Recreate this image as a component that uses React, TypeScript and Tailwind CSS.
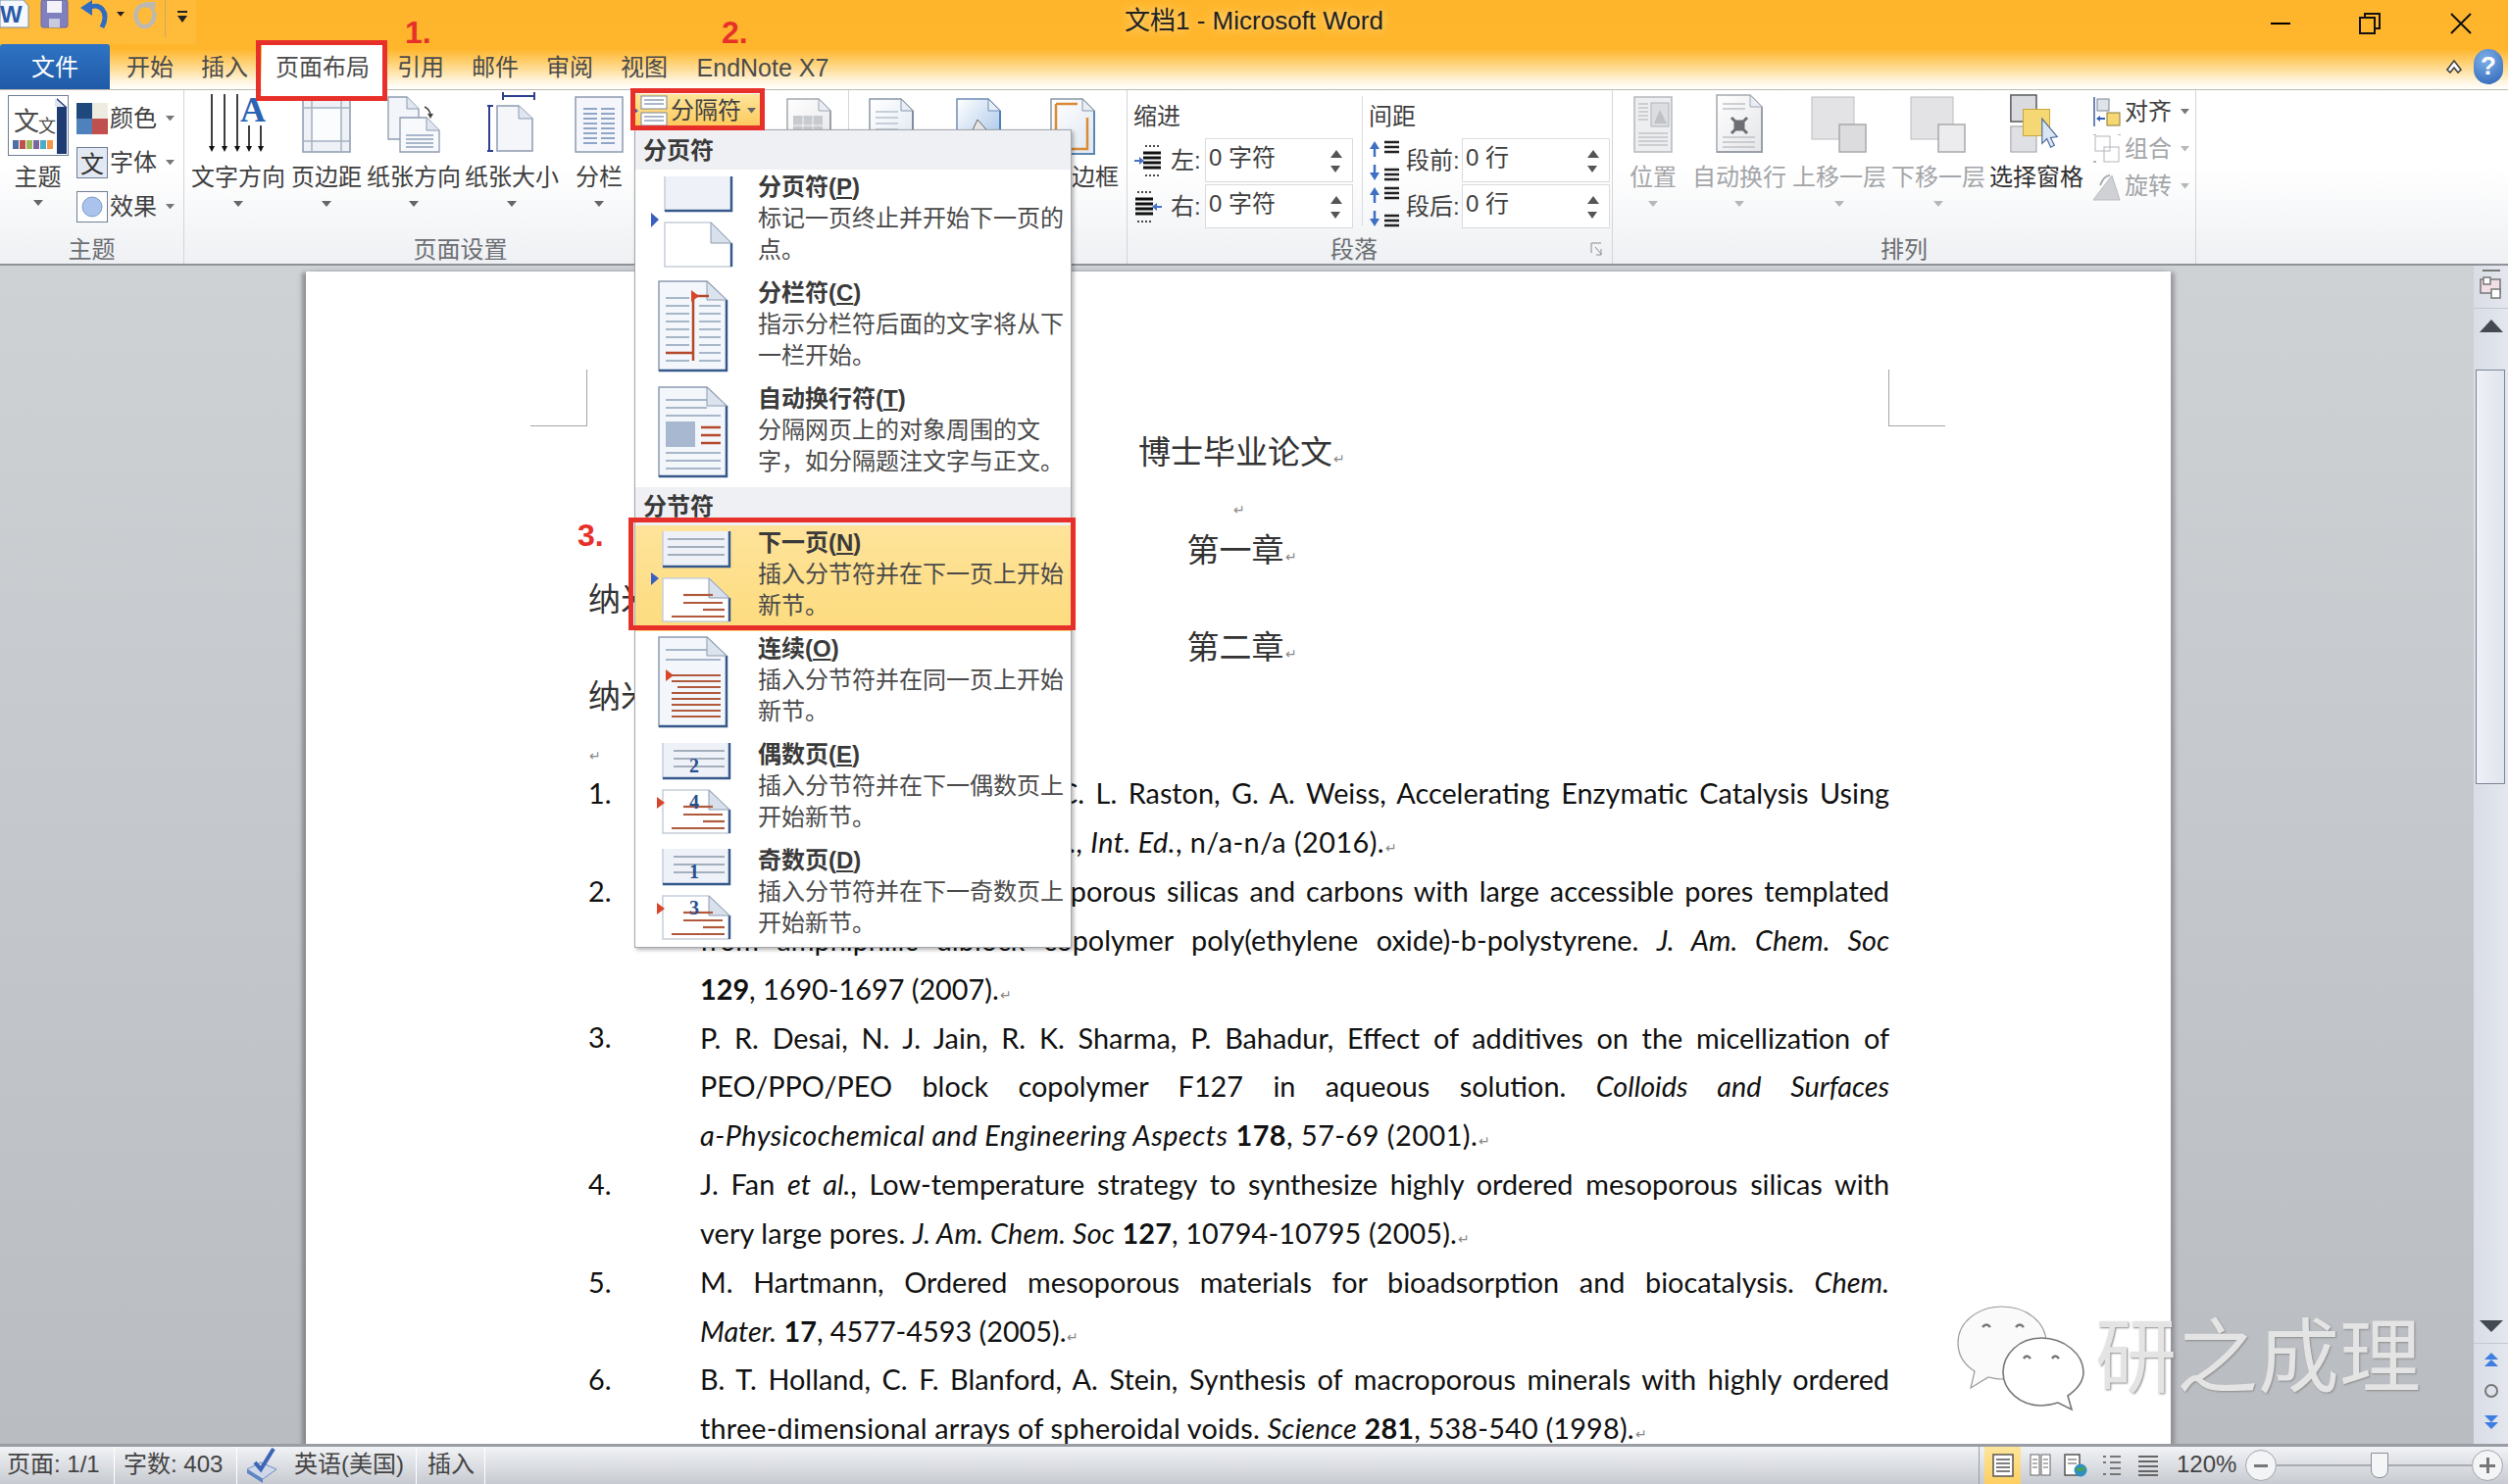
import React, { useId } from "react";

const Caret = ({ c = "#666", s = 9 }: { c?: string; s?: number }) => (
  <svg width={s} height={s * 0.6} viewBox="0 0 10 6"><polygon points="0,0 10,0 5,6" fill={c} /></svg>
);

const Doc = ({ w = 46, h = 58, tone = "#8d9bb0", edge = "#5a78a5", fill = "#dfe7f2", children }: any) => {
  const id = useId();
  return (
    <svg width={w} height={h} viewBox={`0 0 ${w} ${h}`}>
      <defs>
        <linearGradient id={id} x1="0" y1="0" x2="1" y2="1">
          <stop offset="0" stopColor="#ffffff" />
          <stop offset="1" stopColor={fill} />
        </linearGradient>
      </defs>
      <path d={`M1 1 H${w - 13} L${w - 1} 13 V${h - 1} H1 Z`} fill={`url(#${id})`} stroke={tone} strokeWidth="1.5" />
      <path d={`M${w - 1} 13 V${h - 1} H1`} fill="none" stroke={edge} strokeWidth="2" />
      <path d={`M${w - 13} 1 V13 H${w - 1} Z`} fill="#e9eef6" stroke={tone} />
      {children}
    </svg>
  );
};

const TextLines = ({ x1, x2, ys, c = "#8ea0b8", w = 1.5 }: any) => (
  <>{ys.map((y: number) => <line key={y} x1={x1} x2={x2} y1={y} y2={y} stroke={c} strokeWidth={w} />)}</>
);

const ThemeIcon = () => (
  <svg width="62" height="62" viewBox="0 0 62 62">
    <rect x="0.5" y="0.5" width="61" height="61" fill="#fff" stroke="#6f7f96" />
    <text x="6" y="36" fontSize="26" fill="#4a4a4a" fontFamily="'Noto Sans CJK SC'">文</text>
    <text x="31" y="38" fontSize="18" fill="#4a4a4a" fontFamily="'Noto Sans CJK SC'">文</text>
    <path d="M50 3 L60 12 V60 H50 Z" fill="#1f3b74" />
    <path d="M48 3 L58 12 H48 Z" fill="#dfe5ee" />
    {["#4f6fa8", "#c0504d", "#9bbb59", "#8064a2", "#4bacc6", "#f79646"].map((c, i) => (
      <rect key={c} x={5 + i * 7} y="46" width="6" height="9" fill={c} />
    ))}
  </svg>
);
const ColorIcon = () => (
  <svg width="32" height="32" viewBox="0 0 32 32">
    <rect width="16" height="16" fill="#1f497d" /><rect x="16" width="16" height="16" fill="#eeece1" />
    <rect y="16" width="16" height="16" fill="#4f81bd" /><rect x="16" y="16" width="16" height="16" fill="#c0504d" />
  </svg>
);
const FontIcon = () => (
  <svg width="32" height="32" viewBox="0 0 32 32">
    <rect x="0.5" y="0.5" width="31" height="31" fill="#e3e9f2" stroke="#6f7f96" />
    <text x="4" y="26" fontSize="24" fill="#333" fontFamily="'Noto Sans CJK SC'">文</text>
  </svg>
);
const EffectIcon = () => (
  <svg width="32" height="32" viewBox="0 0 32 32">
    <rect x="0.5" y="0.5" width="31" height="31" fill="#fff" stroke="#6f7f96" />
    <circle cx="16" cy="16" r="10" fill="#a9c3ec" stroke="#7f9cc9" />
  </svg>
);
const TextDirIcon = () => (
  <svg width="62" height="60" viewBox="0 0 62 60">
    {[4, 17, 30].map((x) => <g key={x}><line x1={x} x2={x} y1="0" y2="54" stroke="#111" strokeWidth="1.6" /><polygon points={`${x - 3},53 ${x + 3},53 ${x},59`} fill="#111" /></g>)}
    {[42, 54].map((x) => <g key={x}><line x1={x} x2={x} y1="32" y2="54" stroke="#111" strokeWidth="1.6" /><polygon points={`${x - 3},53 ${x + 3},53 ${x},59`} fill="#111" /></g>)}
    <text x="33" y="28" fontSize="36" fontWeight="700" fontFamily="'Liberation Serif'" fill="#2c64b4">A</text>
  </svg>
);
const MarginIcon = () => (
  <svg width="50" height="58" viewBox="0 0 50 58">
    <rect x="1" y="1" width="48" height="56" fill="#eef1f6" stroke="#8d9bb0" strokeWidth="1.5" />
    <path d="M10 1 V57 M40 1 V57 M1 46 H49 M1 12 H49" stroke="#a7b2c2" strokeWidth="1.5" />
    <rect x="11" y="13" width="28" height="32" fill="#fbfcfe" />
  </svg>
);
const OrientIcon = () => (
  <svg width="54" height="58" viewBox="0 0 54 58">
    <path d="M1 1 H20 L32 13 V44 H1 Z" fill="#f2f5fa" stroke="#8d9bb0" strokeWidth="1.3" />
    <path d="M20 1 V13 H32" fill="#dfe6f0" stroke="#8d9bb0" />
    <path d="M13 22 H40 L53 35 V57 H13 Z" fill="#f7f9fc" stroke="#8d9bb0" strokeWidth="1.3" />
    <path d="M40 22 V35 H53" fill="#dfe6f0" stroke="#8d9bb0" />
    <TextLines x1={19} x2={47} ys={[40, 44, 48, 52]} />
    <path d="M38 11 Q44 14 44 20" fill="none" stroke="#444" strokeWidth="1.5" />
    <polygon points="41,18 47,18 44,23" fill="#444" />
  </svg>
);
const SizeIcon = () => (
  <svg width="50" height="62" viewBox="0 0 50 62">
    <path d="M16 4 H48 M16 0 V8 M48 0 V8 M2 14 V60 M-2 14 H6 M-2 60 H6" stroke="#2f3f8f" strokeWidth="2" />
    <path d="M10 14 H32 L46 27 V60 H10 Z" fill="#f4f6fa" stroke="#8d9bb0" strokeWidth="1.5" />
    <path d="M32 14 V27 H46" fill="#dfe6f0" stroke="#8d9bb0" />
  </svg>
);
const ColsIcon = () => (
  <svg width="50" height="58" viewBox="0 0 50 58">
    <rect x="1" y="1" width="48" height="56" fill="#f4f6fb" stroke="#8d9bb0" strokeWidth="1.5" />
    <TextLines x1={9} x2={23} ys={[13, 18, 23, 28, 33, 38, 43, 48]} c="#8fa6c6" w={2} />
    <TextLines x1={27} x2={41} ys={[13, 18, 23, 28, 33, 38, 43, 48]} c="#8fa6c6" w={2} />
  </svg>
);
const BreaksSmall = () => (
  <svg width="36" height="32" viewBox="0 0 36 32">
    <rect x="8" y="1" width="26" height="13" fill="#fff" stroke="#7b8798" />
    <TextLines x1={11} x2={31} ys={[5, 9]} c="#8ea0b8" />
    <rect x="8" y="18" width="26" height="13" fill="#fff" stroke="#7b8798" />
    <TextLines x1={11} x2={31} ys={[22, 26]} c="#8ea0b8" />
    <polygon points="0,12 5,16 0,20" fill="#3b5fc0" />
  </svg>
);
const GrayDoc = ({ children }: any) => <Doc w={46} h={58} tone="#a4a8ae" edge="#9aa0a8" fill="#e4e5e8">{children}</Doc>;
const LineNumIcon = () => <GrayDoc><rect x="7" y="18" width="30" height="30" fill="#c7cace" /><path d="M7 28 H37 M7 38 H37 M17 18 V48 M27 18 V48" stroke="#f5f5f5" /></GrayDoc>;
const WatermarkIcon = () => <Doc tone="#8a97a8" edge="#7d8da5"><TextLines x1={7} x2={30} ys={[14, 20, 26, 32]} c="#b9c1cc" /><text x="12" y="50" fontSize="26" fill="#e99a9a" fontFamily="'Liberation Sans'">A</text></Doc>;
const PageColorIcon = () => <Doc tone="#6f8db5" edge="#4d7fb8" fill="#9dbfe6"><path d="M8 52 L22 22 L36 38 L26 54 Z" fill="#e6e6e6" stroke="#666" /></Doc>;
const BorderIcon = () => <Doc tone="#8a97a8" edge="#5a88b5"><path d="M6 6 H28 M6 6 V52 H38 V20" fill="none" stroke="#d98b36" strokeWidth="2.5" /></Doc>;
const PositionIcon = () => (
  <svg width="40" height="58" viewBox="0 0 40 58">
    <rect x="1" y="1" width="38" height="56" fill="#eceef0" stroke="#b5b8bc" strokeWidth="1.5" />
    <TextLines x1={5} x2={35} ys={[38, 42, 46, 50]} c="#c2c5c9" />
    <TextLines x1={5} x2={15} ys={[8, 12, 16, 20, 24]} c="#c2c5c9" />
    <rect x="18" y="7" width="18" height="24" fill="#dcdde0" stroke="#b0b3b7" />
    <path d="M21 28 L27 14 L34 28 Z" fill="#bfc1c5" />
  </svg>
);
const WrapIcon = () => (
  <Doc w={48} h={60} tone="#a4a8ae" edge="#9aa0a8" fill="#e4e5e8">
    <TextLines x1={7} x2={30} ys={[10, 15]} c="#bfc2c6" />
    <TextLines x1={7} x2={40} ys={[44, 49, 54]} c="#bfc2c6" />
    <path d="M16 24 L32 40 M32 24 L16 40 M20 28 H28 V36 H20 Z" stroke="#6b6e72" strokeWidth="3" fill="#8a8d91" />
  </Doc>
);
const LayerIcon = ({ front }: { front: boolean }) => (
  <svg width="58" height="58" viewBox="0 0 58 58">
    <rect x="1" y="1" width="43" height="43" fill="#e3e3e6" stroke="#bcbcc0" />
    <rect x="29" y="29" width="27" height="28" fill={front ? "#dcdcde" : "#ececee"} stroke="#a9a9ad" strokeWidth="1.5" />
  </svg>
);
const PaneIcon = () => (
  <svg width="56" height="60" viewBox="0 0 56 62">
    <rect x="1" y="1" width="27" height="28" fill="#d9dbdf" stroke="#555" strokeWidth="1.5" />
    <rect x="1" y="34" width="27" height="27" fill="#dfe0e3" stroke="#9a9da2" />
    <rect x="14" y="16" width="28" height="28" fill="#f5d873" stroke="#c9a53d" />
    <path d="M34 26 V52 L39 47 L43 56 L47 54 L43 46 L50 45 Z" fill="#dbe5f4" stroke="#4a6a9c" strokeWidth="1.2" />
  </svg>
);
const AlignIcon = () => (
  <svg width="28" height="30" viewBox="0 0 28 30">
    <line x1="1" y1="0" x2="1" y2="30" stroke="#3c5f96" strokeWidth="1.5" />
    <rect x="4" y="2" width="12" height="12" fill="#dfe3ea" stroke="#7b8798" />
    <rect x="14" y="16" width="13" height="13" fill="#f5d873" stroke="#8a7a3a" />
    <path d="M12 22 H4" stroke="#2f62b5" strokeWidth="2" />
    <polygon points="3,22 7,19 7,25" fill="#2f62b5" />
  </svg>
);
const GroupIcon = () => (
  <svg width="28" height="30" viewBox="0 0 28 30">
    <rect x="2" y="2" width="15" height="15" fill="none" stroke="#b4b6ba" />
    <rect x="11" y="13" width="15" height="15" fill="none" stroke="#b4b6ba" />
    <path d="M0 0h3M25 0h3M0 28h3" stroke="#b4b6ba" strokeWidth="2" />
  </svg>
);
const RotateIcon = () => (
  <svg width="30" height="30" viewBox="0 0 30 30">
    <polygon points="1,29 28,29 20,4" fill="#cfd1d4" stroke="#b9bbbf" />
    <path d="M8 14 Q12 4 18 4" stroke="#aaa" strokeWidth="2" fill="none" />
  </svg>
);
const IndentIcon = ({ right }: { right?: boolean }) => (
  <svg width="30" height="36" viewBox="0 0 30 36" style={right ? { transform: "scaleX(-1)" } : undefined}>
    <path d="M12 3 H27 M12 33 H27" stroke="#111" strokeWidth="1.5" strokeDasharray="2 2" />
    <path d="M10 10 H28 M10 15 H28 M10 20 H28 M10 25 H28" stroke="#111" strokeWidth="3" />
    <path d="M1 18 H8" stroke="#4472c4" strokeWidth="2" />
    <polygon points="11,18 6,14 6,22" fill="#4472c4" />
  </svg>
);
const SpaceIcon = ({ flip }: { flip?: boolean }) => (
  <svg width="32" height="44" viewBox="0 0 32 44" style={flip ? { transform: "scaleY(-1)" } : undefined}>
    <path d="M16 3 H31 M16 8 H31 M16 13 H31 M16 31 H31 M16 36 H31 M16 41 H31" stroke="#222" strokeWidth="2.4" />
    <polygon points="6,2 1,10 11,10" fill="#3f6fc4" /><line x1="6" x2="6" y1="8" y2="18" stroke="#3f6fc4" strokeWidth="2.5" />
    <polygon points="6,42 1,34 11,34" fill="#3f6fc4" /><line x1="6" x2="6" y1="26" y2="36" stroke="#3f6fc4" strokeWidth="2.5" />
  </svg>
);
const Launcher = () => (
  <svg width="12" height="14" viewBox="0 0 12 14"><path d="M1 1 H11 M1 1 V11 M5 5 L11 12 M11 7 V13 H6" stroke="#8a8d91" fill="none" /></svg>
);

const BigBtn = ({ w, label, icon, gray, cls = "" }: any) => (
  <div className={`flex flex-col items-center shrink-0 ${cls}`} style={{ width: w }}>
    <div className="h-[60px] flex items-end justify-center">{icon}</div>
    <div className={`h-[34px] leading-[34px] mt-[8px] whitespace-nowrap ${gray ? "text-[#a3a5a8]" : "text-[#3f3f3f]"}`}>{label}</div>
    <div className="mt-[6px] h-2 flex items-center"><Caret c={gray ? "#b5b7ba" : "#666"} s={10} /></div>
  </div>
);

const SmallRow = ({ icon, label, gray, h }: any) => (
  <div className={`flex items-center ${h}`}>
    <div className="w-[32px] flex justify-center shrink-0">{icon}</div>
    <span className={`ml-[2px] w-[50px] whitespace-nowrap ${gray ? "text-[#a3a5a8]" : "text-[#3f3f3f]"}`}>{label}</span>
    <span className="ml-[7px] flex"><Caret c={gray ? "#b5b7ba" : "#777"} s={9} /></span>
  </div>
);

const Group = ({ w, label, labelCls = "", children, launcher }: any) => (
  <div className="relative flex flex-col h-full border-r border-[#d3d5d9] shrink-0" style={{ width: w }}>
    <div className="flex-1 flex pt-[4px] overflow-visible">{children}</div>
    <div className={`h-[32px] leading-[35px] text-center text-[#6c6f73] ${labelCls}`}>{label}</div>
    {launcher && <div className="absolute right-[10px] bottom-[8px] flex"><Launcher /></div>}
  </div>
);

const Spin = ({ value, label, icon, wide }: any) => (
  <div className="flex items-center h-[47px]">
    <div className="w-[38px] flex justify-start shrink-0">{icon}</div>
    <span className={`${wide ? "w-[57px]" : "w-[35px]"} whitespace-nowrap text-[#3f3f3f] shrink-0`}>{label}</span>
    <div className="w-[151px] h-[45px] bg-white border border-[#d9dbdf] flex pl-[3px] pt-[1px] justify-between text-[#3f3f3f]">
      <span>{value}</span>
      <span className="flex flex-col gap-[8px] pt-[10px] pr-[10px]">
        <svg width="12" height="8" viewBox="0 0 12 8"><polygon points="6,0 12,8 0,8" fill="#555" /></svg>
        <svg width="10" height="7" viewBox="0 0 10 7"><polygon points="0,0 10,0 5,7" fill="#555" /></svg>
      </span>
    </div>
  </div>
);

const Ribbon = () => (
  <div className="h-[179px] flex shrink-0 text-[24px] border-b-2 border-[#8f9297] bg-[linear-gradient(to_bottom,#ffffff_0%,#ffffff_45%,#eef0f3_100%)]">
    <Group w={188} label="主题">
      <div className="pl-[1px] flex flex-col items-center w-[76px]">
        <div className="h-[64px] flex items-start pt-[1px]"><ThemeIcon /></div>
        <div className="text-[#3f3f3f] h-[34px] leading-[34px] mt-[4px]">主题</div>
        <div className="mt-[6px]"><Caret s={10} /></div>
      </div>
      <div className="flex flex-col pl-[2px] pt-[2px]">
        <SmallRow h="h-[45px]" icon={<ColorIcon />} label="颜色" />
        <SmallRow h="h-[45px]" icon={<FontIcon />} label="字体" />
        <SmallRow h="h-[45px]" icon={<EffectIcon />} label="效果" />
      </div>
    </Group>
    <Group w={678} label="页面设置" labelCls="pr-[114px]">
      <div className="pl-[7px] flex">
        <BigBtn w={96} label="文字方向" icon={<TextDirIcon />} />
        <BigBtn cls="ml-[6px]" w={72} label="页边距" icon={<MarginIcon />} />
        <BigBtn cls="ml-[5px]" w={96} label="纸张方向" icon={<OrientIcon />} />
        <BigBtn cls="ml-[4px]" w={96} label="纸张大小" icon={<SizeIcon />} />
        <BigBtn cls="ml-[17px]" w={48} label="分栏" icon={<ColsIcon />} />
        <div className="ml-[11px] w-[129px] h-[34px] flex items-center bg-[linear-gradient(to_bottom,#fde59a,#fdc95a)] shrink-0">
          <BreaksSmall />
          <span className="ml-[2px] text-[#3f3f3f]">分隔符</span>
          <span className="ml-[6px] flex"><Caret s={9} /></span>
        </div>
        <div className="ml-[27px] pt-[4px]"><LineNumIcon /></div>
      </div>
    </Group>
    <Group w={284} label="页面背景">
      <div className="pl-[20px] flex">
        <div className="pt-[4px]"><WatermarkIcon /></div>
        <div className="pt-[4px] ml-[43px]"><PageColorIcon /></div>
        <div className="ml-[50px]">
          <div className="pt-[4px]"><BorderIcon /></div>
          <div className="h-[34px] leading-[34px] mt-[6px] ml-[-26px] w-[72px] text-right text-[#3f3f3f] whitespace-nowrap">页面边框</div>
        </div>
      </div>
    </Group>
    <Group w={495} label="段落" labelCls="pr-[32px]" launcher>
      <div className="pl-[6px] pt-[2px] flex">
        <div className="w-[232px] shrink-0">
          <div className="h-[42px] leading-[42px] text-[#3f3f3f]">缩进</div>
          <Spin value="0 字符" label="左:" icon={<IndentIcon />} />
          <Spin value="0 字符" label="右:" icon={<IndentIcon right />} />
        </div>
        <div className="border-l border-[#d9dbdf] h-[132px] pl-[6px] ml-[1px] w-[253px] shrink-0">
          <div className="h-[42px] leading-[42px] text-[#3f3f3f]">间距</div>
          <Spin wide value="0 行" label="段前:" icon={<SpaceIcon />} />
          <Spin wide value="0 行" label="段后:" icon={<SpaceIcon flip />} />
        </div>
      </div>
    </Group>
    <Group w={595} label="排列">
      <div className="pl-[17px] flex">
        <BigBtn gray w={48} label="位置" icon={<PositionIcon />} />
        <BigBtn gray cls="ml-[16px]" w={96} label="自动换行" icon={<WrapIcon />} />
        <BigBtn gray cls="ml-[6px]" w={96} label="上移一层" icon={<LayerIcon front />} />
        <BigBtn gray cls="ml-[5px]" w={96} label="下移一层" icon={<LayerIcon front={false} />} />
        <div className="ml-[4px] w-[96px] flex flex-col items-center shrink-0">
          <div className="h-[60px] flex items-end"><PaneIcon /></div>
          <div className="h-[34px] leading-[34px] mt-[8px] text-[#2f2f2f] whitespace-nowrap">选择窗格</div>
        </div>
        <div className="ml-[8px] flex flex-col -mt-[1px]">
          <SmallRow h="h-[38px]" icon={<AlignIcon />} label="对齐" />
          <SmallRow gray h="h-[38px]" icon={<GroupIcon />} label="组合" />
          <SmallRow gray h="h-[38px]" icon={<RotateIcon />} label="旋转" />
        </div>
      </div>
    </Group>
    <div className="flex-1" />
  </div>
);

const TopBar = () => (
  <div className="h-[92px] shrink-0 border-b border-[#bdbab2] bg-[linear-gradient(to_bottom,#ffb52b_0%,#ffb62c_55%,#ffd98a_75%,#fff6e2_92%,#ffffff_100%)]">
    <div className="h-[45px] relative flex items-start">
      <div className="flex items-start h-[45px] pr-[8px] bg-[#ffc24f]/40 shrink-0">
        <svg width="30" height="30" viewBox="0 0 30 30">
          <path d="M0 0 H24 L29 6 V28 H0 Z" fill="#f5f8fc" stroke="#7d8da5" />
          <text x="0" y="23" fontSize="24" fontWeight="700" fontFamily="'Liberation Sans'" fill="#2a5aa8">W</text>
        </svg>
        <svg className="ml-[11px]" width="30" height="30" viewBox="0 0 30 30">
          <rect x="1" y="0" width="27" height="28" rx="2" fill="#8080c0" stroke="#6a6a9a" />
          <rect x="7" y="1" width="15" height="12" fill="#f2f2f8" />
          <rect x="9" y="19" width="11" height="9" fill="#c9c9df" />
        </svg>
        <svg className="ml-[9px]" width="34" height="32" viewBox="0 0 34 32">
          <path d="M10 8 C22 2 32 12 24 28" fill="none" stroke="#2f6dc0" strokeWidth="5" />
          <polygon points="2,8 14,0 14,16" fill="#2f6dc0" />
        </svg>
        <span className="ml-[5px] mt-[12px] flex"><Caret c="#222" s={8} /></span>
        <svg className="ml-[8px]" width="26" height="30" viewBox="0 0 26 30">
          <path d="M16 6 C5 2 -1 16 8 26 C16 30 24 22 22 12" fill="none" stroke="#bdb9ae" strokeWidth="4.5" />
          <polygon points="24,2 12,2 22,14" fill="#bdb9ae" />
        </svg>
        <div className="ml-[7px] w-px h-[38px] bg-[#c9a860]" />
        <div className="ml-[11px] mt-[11px]">
          <svg width="12" height="14" viewBox="0 0 12 14"><path d="M1 1 H11" stroke="#222" strokeWidth="2" /><polygon points="1,5 11,5 6,12" fill="#222" /></svg>
        </div>
      </div>
      <div className="flex-1 text-center text-[26px] leading-[42px] text-[#222] pl-[42px] whitespace-pre [text-shadow:0_0_10px_#ffe6a3]">文档1 - Microsoft Word</div>
      <div className="flex items-center h-[45px] pt-[3px] pr-[37px] text-[#111] shrink-0">
        <span className="w-[20px] h-[2px] bg-black" />
        <svg className="ml-[70px]" width="22" height="22" viewBox="0 0 22 22">
          <rect x="1" y="5" width="15" height="16" fill="none" stroke="#111" strokeWidth="2" />
          <path d="M6 5 V1 H21 V16 H16" fill="none" stroke="#111" strokeWidth="2" />
        </svg>
        <svg className="ml-[71px]" width="22" height="22" viewBox="0 0 22 22"><path d="M1 1 L21 21 M21 1 L1 21" stroke="#111" strokeWidth="2" /></svg>
      </div>
    </div>
    <div className="h-[46px] flex items-stretch text-[24px] text-[#4b4b4b] leading-[48px]">
      <div className="w-[112px] bg-[linear-gradient(to_bottom,#2f74c4,#1f5aa8)] rounded-t-[3px] text-white text-center">文件</div>
      <div className="w-[3px]" />
      <div className="w-[76px] text-center">开始</div>
      <div className="w-[76px] text-center">插入</div>
      <div className="w-[124px] text-center bg-white h-[47px]">页面布局</div>
      <div className="w-[76px] text-center">引用</div>
      <div className="w-[76px] text-center">邮件</div>
      <div className="w-[76px] text-center">审阅</div>
      <div className="w-[76px] text-center">视图</div>
      <div className="w-[166px] text-center text-[25px]">EndNote X7</div>
      <div className="flex-1" />
      <div className="flex items-center pr-[5px] gap-[12px]">
        <svg width="16" height="14" viewBox="0 0 16 14"><path d="M8 1 L15 10 L12 13 L8 8 L4 13 L1 10 Z" fill="#fff" stroke="#444" strokeWidth="1.6" /></svg>
        <div className="w-[30px] h-[36px] rounded-full bg-[radial-gradient(circle_at_40%_30%,#7fb0ea,#2a62b5)] text-white font-bold text-center leading-[34px] text-[26px] [font-family:'Liberation_Sans']">?</div>
      </div>
    </div>
  </div>
);

const SplitIcon = ({ topLines, botLines, topDigit, botDigit, blueArrow = true, sparse }: any) => (
  <svg className="shrink-0" width="90" height="104" viewBox="0 0 90 104">
    <path d="M15 5 V41 H83 V5" fill="#eef2f8" stroke="#c6ced9" strokeWidth="1.5" />
    <path d="M15 41 H83 V5" fill="none" stroke="#35588a" strokeWidth="2.5" />
    <TextLines x1={sparse ? 26 : 20} x2={78} ys={topLines} c="#a3afbd" w={2} />
    {topDigit && <text x="42" y="35" fontSize="20" fontWeight="700" fontFamily="'Liberation Serif'" fill="#27508f">{topDigit}</text>}
    <path d="M15 53 H62 L83 73 V97 H15 Z" fill="#fff" stroke="#c6ced9" strokeWidth="1.5" />
    <path d="M83 73 V97" stroke="#35588a" strokeWidth="2.5" />
    <path d="M62 53 V73 H83 Z" fill="#d8e0ec" stroke="#8d9bb0" />
    {botLines.map((l: number[]) => <line key={l[0]} x1={l[1]} x2={l[2]} y1={l[0]} y2={l[0]} stroke="#b0593c" strokeWidth="2.2" />)}
    {botDigit && <text x="42" y="72" fontSize="20" fontWeight="700" fontFamily="'Liberation Serif'" fill="#27508f">{botDigit}</text>}
    {blueArrow
      ? <polygon points="3,47 11,53 3,60" fill="#3b5fc0" />
      : <polygon points="9,60 17,66 9,72" fill="#d9452a" />}
  </svg>
);

const PlainBreak = () => (
  <svg className="shrink-0" width="90" height="104" viewBox="0 0 90 104">
    <path d="M17 6 V41 H85 V6" fill="#eef2f8" stroke="#c6ced9" strokeWidth="1.5" />
    <path d="M17 41 H85 V6" fill="none" stroke="#35588a" strokeWidth="2.5" />
    <path d="M17 53 H64 L85 74 V98 H17 Z" fill="#fff" stroke="#c6ced9" strokeWidth="1.5" />
    <path d="M85 74 V98" stroke="#35588a" strokeWidth="2.5" />
    <path d="M64 53 V74 H85 Z" fill="#d8e0ec" stroke="#8d9bb0" />
    <polygon points="3,43 11,50 3,58" fill="#3b5fc0" />
  </svg>
);

const PageShape = ({ children }: any) => (
  <svg className="shrink-0" width="90" height="104" viewBox="0 0 90 104">
    <path d="M11 5 H60 L80 24 V96 H11 Z" fill="#f3f6fb" stroke="#8d9bb0" strokeWidth="1.5" />
    <path d="M11 96 H80 V24" fill="none" stroke="#35588a" strokeWidth="2.5" />
    <path d="M60 5 V24 H80 Z" fill="#dbe3ee" stroke="#8d9bb0" />
    {children}
  </svg>
);

const MenuRow = ({ title, k, l1, l2, icon, active }: any) => (
  <div className={`h-[108px] flex items-start pl-[13px] shrink-0 ${active ? "bg-[linear-gradient(to_bottom,#fee39a,#fddc7e)]" : ""}`}>
    <div className="w-[100px] pt-[1px] shrink-0">{icon}</div>
    <div className="ml-[12px] leading-[32px] pt-[2px] text-[24px] text-[#4a4a4a] whitespace-nowrap">
      <div className="font-bold text-[#3a3a3a]">{title}(<span className="underline">{k}</span>)</div>
      <div>{l1}</div>
      <div>{l2}</div>
    </div>
  </div>
);

const redLines = [[70, 36, 66], [78, 36, 76], [85, 56, 78], [92, 24, 78]];

const Menu = () => (
  <div className="absolute left-[647px] top-[132px] w-[446px] h-[835px] bg-white border border-[#a3a7ae] shadow-[2px_2px_4px_rgba(0,0,0,0.3)] flex flex-col z-10">
    <div className="h-[40px] bg-[#eff0f3] pl-[8px] font-bold text-[24px] leading-[42px] text-[#3a3a3a] shrink-0">分页符</div>
    <MenuRow title="分页符" k="P" l1="标记一页终止并开始下一页的" l2="点。" icon={<PlainBreak />} />
    <MenuRow title="分栏符" k="C" l1="指示分栏符后面的文字将从下" l2="一栏开始。" icon={
      <PageShape>
        <TextLines x1={18} x2={42} ys={[22, 30, 38, 46, 54, 62, 70, 78, 86]} />
        <TextLines x1={52} x2={74} ys={[30, 38, 46, 54, 62, 70, 78, 86]} />
        <path d="M18 78 H46 V86 M46 78 L46 20 H62" fill="none" stroke="#b5482d" strokeWidth="2.5" />
        <polygon points="44,14 52,20 44,26" fill="#d9452a" />
      </PageShape>
    } />
    <MenuRow title="自动换行符" k="T" l1="分隔网页上的对象周围的文" l2="字，如分隔题注文字与正文。" icon={
      <PageShape>
        <TextLines x1={18} x2={60} ys={[18, 26]} />
        <TextLines x1={18} x2={74} ys={[34, 72, 80, 88]} />
        <rect x="18" y="40" width="30" height="26" fill="#a8b8d0" />
        <TextLines x1={54} x2={74} ys={[46, 54, 62]} c="#b5482d" w={2.5} />
      </PageShape>
    } />
    <div className="h-[39px] bg-[#eff0f3] pl-[8px] font-bold text-[24px] leading-[40px] text-[#3a3a3a] shrink-0">分节符</div>
    <MenuRow active title="下一页" k="N" l1="插入分节符并在下一页上开始" l2="新节。" icon={<SplitIcon topLines={[13, 21, 29]} botLines={redLines} />} />
    <MenuRow title="连续" k="O" l1="插入分节符并在同一页上开始" l2="新节。" icon={
      <PageShape>
        <TextLines x1={18} x2={60} ys={[18]} />
        <TextLines x1={18} x2={74} ys={[28]} />
        {[44, 50, 56, 62, 68, 74, 80, 86].map((y) => <line key={y} x1={y === 56 ? 30 : 24} x2={74} y1={y} y2={y} stroke="#b0593c" strokeWidth="2.2" />)}
        <polygon points="18,38 26,44 18,50" fill="#d9452a" />
      </PageShape>
    } />
    <MenuRow title="偶数页" k="E" l1="插入分节符并在下一偶数页上" l2="开始新节。" icon={<SplitIcon sparse topLines={[13, 21, 29]} botLines={redLines} topDigit="2" botDigit="4" blueArrow={false} />} />
    <MenuRow title="奇数页" k="D" l1="插入分节符并在下一奇数页上" l2="开始新节。" icon={<SplitIcon sparse topLines={[13, 21, 29]} botLines={redLines} topDigit="1" botDigit="3" blueArrow={false} />} />
  </div>
);

const R = () => <span className="text-[14px] leading-[0] text-[#888] ml-[1px] align-baseline">↵</span>;

const Ref = ({ n, j, cls = "", children }: any) => (
  <div className="h-[49.85px] flex items-center shrink-0">
    <div className="w-[114px] shrink-0">{n}</div>
    <div className={`flex-1 min-w-0 leading-[49px] ${j ? "text-justify [text-align-last:justify]" : ""} ${cls}`}>{children}</div>
  </div>
);

const Cjk = ({ children }: any) => <div className="h-[49.85px] leading-[49px] text-center text-[33px] text-[#333] shrink-0 pl-[6px]">{children}</div>;

const Page = () => (
  <div className="relative ml-[312px] mt-[6px] w-[1902px] bg-white shadow-[-5px_0_4px_-1px_rgba(90,90,95,0.55),5px_0_4px_-1px_rgba(90,90,95,0.45)] h-[1300px] pl-[288px] pr-[287px] pt-[159px] flex flex-col text-[28.8px] text-[#111] [font-family:Lato,'Noto_Sans_CJK_SC',sans-serif]">
    <div className="absolute left-[229px] top-[100px] w-[58px] h-[58px] border-r border-b border-[#a5a5a5]" />
    <div className="absolute left-[1614px] top-[100px] w-[58px] h-[58px] border-l border-b border-[#a5a5a5]" />
    <Cjk>博士毕业论文<R /></Cjk>
    <div className="h-[49.85px] text-center shrink-0 pt-[8px] leading-[40px]"><R /></div>
    <Cjk>第一章<R /></Cjk>
    <div className="h-[49.85px] leading-[49px] text-[33px] text-[#333] shrink-0">纳米</div>
    <Cjk>第二章<R /></Cjk>
    <div className="h-[49.85px] leading-[49px] text-[33px] text-[#333] shrink-0">纳米</div>
    <div className="h-[49.85px] shrink-0 leading-[60px]"><R /></div>
    <Ref n="1." j>J. Britton, L. M. Meneghini, C. L. Raston, G. A. Weiss, Accelerating Enzymatic Catalysis Using</Ref>
    <Ref cls="tracking-[0.45px]">Vortex Fluidics. <i>Angew. Chem., Int. Ed.</i>, n/a-n/a (2016).<R /></Ref>
    <Ref n="2." j>Y. Deng et al., Ordered mesoporous silicas and carbons with large accessible pores templated</Ref>
    <Ref j>from amphiphilic diblock copolymer poly(ethylene oxide)-b-polystyrene. <i>J. Am. Chem. Soc</i></Ref>
    <Ref><b>129</b>, 1690-1697 (2007).<R /></Ref>
    <Ref n="3." j>P. R. Desai, N. J. Jain, R. K. Sharma, P. Bahadur, Effect of additives on the micellization of</Ref>
    <Ref j>PEO/PPO/PEO block copolymer F127 in aqueous solution. <i>Colloids and Surfaces</i></Ref>
    <Ref cls="tracking-[0.5px]"><i>a-Physicochemical and Engineering Aspects</i> <b>178</b>, 57-69 (2001).<R /></Ref>
    <Ref n="4." j>J. Fan <i>et al.</i>, Low-temperature strategy to synthesize highly ordered mesoporous silicas with</Ref>
    <Ref cls="tracking-[0.14px]">very large pores. <i>J. Am. Chem. Soc</i> <b>127</b>, 10794-10795 (2005).<R /></Ref>
    <Ref n="5." j>M. Hartmann, Ordered mesoporous materials for bioadsorption and biocatalysis. <i>Chem.</i></Ref>
    <Ref><i>Mater.</i> <b>17</b>, 4577-4593 (2005).<R /></Ref>
    <Ref n="6." j>B. T. Holland, C. F. Blanford, A. Stein, Synthesis of macroporous minerals with highly ordered</Ref>
    <Ref cls="tracking-[0.2px]">three-dimensional arrays of spheroidal voids. <i>Science</i> <b>281</b>, 538-540 (1998).<R /></Ref>
  </div>
);

const Scrollbar = () => (
  <div className="w-[35px] shrink-0 bg-[linear-gradient(to_right,#d9dde5,#e4e7ee)] flex flex-col items-center">
    <div className="h-[44px] w-full flex flex-col items-center border-b border-[#c3c7ce] pt-[4px]">
      <span className="w-[18px] h-[2px] bg-[#777]" />
      <svg className="mt-[4px]" width="24" height="24" viewBox="0 0 24 24">
        <rect x="1" y="4" width="20" height="14" fill="#f1dfe6" stroke="#777" strokeWidth="1.5" />
        <rect x="12" y="14" width="9" height="9" fill="#fff" stroke="#777" strokeWidth="1.5" />
        <rect x="4" y="2" width="7" height="7" fill="#fff" stroke="#777" strokeWidth="1.5" />
      </svg>
    </div>
    <svg className="mt-[11px]" width="24" height="13" viewBox="0 0 24 13"><polygon points="12,0 24,13 0,13" fill="#444a52" /></svg>
    <div className="mt-[38px] w-[30px] h-[423px] border border-[#7d8695] bg-[linear-gradient(to_right,#eef0f6,#e0e4ec)] -translate-x-[1px]" />
    <div className="flex-1" />
    <svg width="24" height="12" viewBox="0 0 24 12"><polygon points="0,0 24,0 12,12" fill="#444a52" /></svg>
    <div className="mt-[11px] w-full border-t border-[#c3c7ce] h-[103px] flex flex-col items-center pt-[9px] gap-[16px]">
      <svg width="14" height="16" viewBox="0 0 14 16"><polygon points="7,0 14,7 0,7" fill="#3d7ee0" /><polygon points="7,7 14,14 0,14" fill="#3d7ee0" /></svg>
      <span className="w-[14px] h-[14px] rounded-full border-2 border-[#777]" />
      <svg width="14" height="16" viewBox="0 0 14 16"><polygon points="0,2 14,2 7,9" fill="#3d7ee0" /><polygon points="0,9 14,9 7,16" fill="#3d7ee0" /></svg>
    </div>
  </div>
);

const Sep = () => <span className="w-px h-full bg-[#a9acb2] border-r border-white" />;

const StatusBar = () => (
  <div className="h-[41px] shrink-0 border-t-[3px] border-[#9a9ea4] bg-[linear-gradient(to_bottom,#f1f3f6,#c7cad0)] flex items-stretch text-[24px] text-[#444] leading-[36px]">
    <span className="pl-[7px] w-[116px] whitespace-nowrap">页面: 1/1</span><Sep />
    <span className="pl-[9px] w-[124px] whitespace-nowrap">字数: 403</span><Sep />
    <svg className="ml-[8px] mt-[1px]" width="34" height="36" viewBox="0 0 34 36">
      <path d="M2 22 L16 15 L32 22 L18 32 Z" fill="#cfd8e8" stroke="#6b8fc7" />
      <path d="M2 22 V26 L18 36 V32 Z" fill="#5f86c4" />
      <path d="M10 15 L16 22 L29 1" fill="none" stroke="#3d64b5" strokeWidth="4" />
    </svg>
    <span className="ml-[16px] w-[124px] whitespace-nowrap">英语(美国)</span><Sep />
    <span className="pl-[11px] w-[69px] whitespace-nowrap">插入</span><Sep />
    <div className="flex-1" />
    <span className="w-px h-full bg-[#9a9da3]" />
    <div className="ml-[5px] w-[37px] bg-[linear-gradient(to_bottom,#fde59a,#fdcf62)] flex items-center justify-center">
      <svg width="22" height="24" viewBox="0 0 22 24"><rect x="1" y="1" width="20" height="22" fill="#fff" stroke="#555" strokeWidth="1.5" /><path d="M4 6 H18 M4 10 H18 M4 14 H18 M4 18 H18" stroke="#555" strokeWidth="1.5" /></svg>
    </div>
    <div className="ml-[9px] flex items-center">
      <svg width="22" height="24" viewBox="0 0 22 24"><rect x="1" y="1" width="9" height="21" fill="#fff" stroke="#666" /><rect x="12" y="1" width="9" height="21" fill="#fff" stroke="#666" /><path d="M3 6 H8 M3 10 H8 M3 14 H8 M14 6 H19 M14 10 H19 M14 14 H19" stroke="#666" /></svg>
    </div>
    <div className="ml-[13px] flex items-center">
      <svg width="24" height="24" viewBox="0 0 24 24"><rect x="1" y="1" width="15" height="21" fill="#fff" stroke="#555" strokeWidth="1.5" /><path d="M4 6 H13 M4 10 H13" stroke="#555" /><circle cx="17" cy="17" r="6.5" fill="#2f8fc0" /><path d="M13 15 Q17 19 21 14" stroke="#4aa34a" strokeWidth="3" fill="none" /></svg>
    </div>
    <div className="ml-[15px] flex items-center">
      <svg width="20" height="22" viewBox="0 0 20 22"><path d="M1 2 H4 M8 2 H19 M1 8 H4 M8 8 H19 M8 14 H19 M1 20 H4 M8 20 H19" stroke="#777" strokeWidth="2" /></svg>
    </div>
    <div className="ml-[17px] flex items-center">
      <svg width="20" height="22" viewBox="0 0 20 22"><path d="M0 2 H20 M0 7 H20 M0 12 H20 M0 17 H20 M0 21 H20" stroke="#666" strokeWidth="2" /></svg>
    </div>
    <span className="ml-[19px] w-[64px] whitespace-nowrap">120%</span>
    <div className="relative ml-[6px] w-[263px] flex items-center">
      <span className="w-[32px] h-[32px] rounded-full border border-[#a2a5ab] bg-[#f3f4f6] flex items-center justify-center shrink-0"><span className="w-[14px] h-[3px] bg-[#777]" /></span>
      <span className="flex-1 h-[2px] bg-[#a9acb2]" />
      <span className="w-[32px] h-[32px] rounded-full border border-[#a2a5ab] bg-[#f3f4f6] flex items-center justify-center shrink-0 relative">
        <span className="w-[16px] h-[3px] bg-[#777]" /><span className="absolute w-[3px] h-[16px] bg-[#777]" />
      </span>
      <span className="absolute left-[128px] top-[6px] w-[18px] h-[26px] bg-[#f4f5f7] border border-[#8c8f95] rounded-b-[8px]" />
    </div>
    <div className="w-[5px]" />
  </div>
);

const Watermark = () => (
  <div className="absolute left-[1996px] top-[1332px] flex items-start z-[5] pointer-events-none">
    <svg width="130" height="108" viewBox="0 0 130 108">
      <g stroke="#9a9a9a" strokeWidth="1.2" fill="#fafafa">
        <path d="M46 1 C21 1 1 17 1 38 C1 50 7 60 18 67 L14 84 L32 73 C37 74 41 75 46 75 C71 75 91 58 91 38 C91 17 71 1 46 1 Z" />
        <path d="M86 33 C63 33 47 50 47 68 C47 87 65 102 86 102 C92 102 97 101 103 99 L117 106 L113 92 C123 85 129 77 129 68 C129 50 110 33 86 33 Z" stroke="#777" strokeWidth="1.6" fill="#fff" />
      </g>
      <path d="M26 22 q4 -5 8 0 M60 22 q4 -5 8 0 M68 54 q3 -5 7 0 M97 54 q3 -5 7 0" stroke="#777" strokeWidth="2.5" fill="none" />
    </svg>
    <div className="ml-[11px] mt-[2px] text-[83px] leading-[88px] text-[#e4e4e4] whitespace-nowrap [font-family:'Noto_Sans_CJK_SC',sans-serif] [text-shadow:1px_1px_2px_#8c8c8c]">研之成理</div>
  </div>
);

const Tag = ({ cls, children }: any) => (
  <div className={`absolute z-20 text-[32px] font-bold leading-none text-[#e8302a] [font-family:'Liberation_Sans',sans-serif] ${cls}`}>{children}</div>
);
const RedBox = ({ cls }: any) => <div className={`absolute z-20 border-[5px] border-[#e8302a] ${cls}`} />;

export default function App() {
  return (
    <div className="relative w-[2558px] h-[1514px] overflow-hidden flex flex-col bg-[#bcbfc4] [font-family:'Liberation_Sans','Noto_Sans_CJK_SC',sans-serif]">
      <TopBar />
      <Ribbon />
      <div className="flex-1 min-h-0 flex bg-[linear-gradient(to_bottom,#cfd2d5,#b9bcc1)]">
        <div className="flex-1 min-w-0 overflow-hidden"><Page /></div>
        <Scrollbar />
      </div>
      <StatusBar />
      <Menu />
      <Watermark />
      <RedBox cls="left-[261px] top-[41px] w-[134px] h-[62px]" />
      <RedBox cls="left-[643px] top-[90px] w-[137px] h-[43px]" />
      <RedBox cls="left-[641px] top-[528px] w-[456px] h-[115px]" />
      <Tag cls="left-[413px] top-[17px]">1.</Tag>
      <Tag cls="left-[736px] top-[17px]">2.</Tag>
      <Tag cls="left-[589px] top-[530px]">3.</Tag>
    </div>
  );
}
